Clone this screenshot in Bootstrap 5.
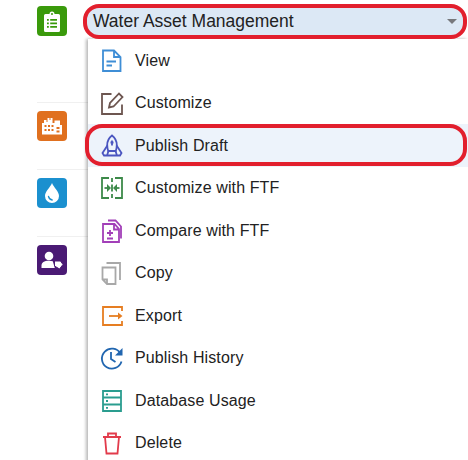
<!DOCTYPE html>
<html lang="en">
<head>
<meta charset="utf-8">
<title>Water Asset Management</title>
<link href="https://cdn.jsdelivr.net/npm/bootstrap@5.3.0/dist/css/bootstrap.min.css" rel="stylesheet">
<style>
html,body{height:100%;overflow:hidden}
body{background:#fff;font-family:"Liberation Sans",Arial,sans-serif;color:#222;position:relative}
.app-row{height:67px;padding-top:8px;margin-left:37px;border-bottom:1px solid #f0f0f0}
.app-row:first-child{height:103px;padding-top:6px}
.app-tile{width:30px;height:30px;border-radius:4px}
.app-tile svg{width:30px;height:30px;display:block}
.t-green{background:#3a9a0b}.t-orange{background:#e0701f}.t-blue{background:#1b90cf}.t-purple{background:#4a1a74}
.picker{position:absolute;left:83px;top:4px;width:384px;height:35px;background:#dce8f5;border:4px solid #e21f2d;border-radius:16px;padding:0 6px;font-size:17.5px;color:#222;z-index:3}
.picker-caret{border-left:5px solid transparent;border-right:5px solid transparent;border-top:5px solid #77787c;margin-right:0}
.menu-panel{position:absolute;left:88px;top:39.25px;right:0;background:#fff;box-shadow:-2px 0 3px rgba(0,0,0,.28);z-index:2;border-radius:0;--bs-list-group-border-width:0}
.menu-row{height:42.5px;padding:0 0 0 10px;gap:9px;font-size:16px;color:#222;letter-spacing:.12px;position:relative;background:#fff}
.menu-row svg{width:28px;height:28px;flex:none}
.menu-row.is-hot{background:#edf3fb}
.menu-row.is-hot::after{content:"";position:absolute;left:-3px;right:1px;top:0;bottom:1px;border:4px solid #e21f2d;border-radius:17px}
.menu-row svg *{fill:none;stroke-width:1.8}
.menu-row svg .solid{fill:currentColor;stroke:none}
.c-view{color:#3f8ed6}.c-cust{color:#6d5650}.c-pub{color:#4a55c0}.c-ftf{color:#3d8a4a}.c-cmp{color:#a23fb8}.c-copy{color:#a8a8a8}.c-exp{color:#e67e22}.c-hist{color:#2166b0}.c-db{color:#2a9d8f}.c-del{color:#e23b4b}
</style>
</head>
<body>
<div class="d-flex flex-column">
  <div class="app-row"><div class="app-tile t-green"><svg viewBox="0 0 30 30"><path fill="#fff" fill-rule="evenodd" d="M8.500 8h4a2.500 2.500 0 0 1 5 0h4A1.500 1.500 0 0 1 23 9.500V24.500A1.500 1.500 0 0 1 21.500 26h-13A1.500 1.500 0 0 1 7 24.500V9.500A1.500 1.500 0 0 1 8.500 8zM15 7a1 1 0 1 0 0 2 1 1 0 0 0 0-2zM10 13v1.800h1.800V13zM13.200 13v1.800h6.800V13zM10 16.500v1.800h1.800v-1.800zM13.200 16.500v1.800h6.800v-1.800zM10 20v1.800h1.800V20zM13.200 20v1.800h6.800V20z"/></svg></div></div>
  <div class="app-row"><div class="app-tile t-orange"><svg viewBox="0 0 30 30"><path fill="#fff" fill-rule="evenodd" d="M5 12h2V9h2.500v2h1V7h2v2h1V7h2v5h2V9.500h5.500V14H25v9.500H5zM7.500 14v2h2v-2zM11 14v2h2v-2zM14.500 14v2h2v-2zM7.500 18v2h2v-2zM11 18v2h2v-2zM14.500 18v2h2v-2zM19.500 16v2h3v-2zM19.500 19.500v2h3v-2z"/></svg></div></div>
  <div class="app-row"><div class="app-tile t-blue"><svg viewBox="0 0 30 30"><path fill="#fff" d="M15 5c1.800 4.500 7 8.500 7 13a7 7 0 0 1-14 0C8 13.500 13.200 9.500 15 5z"/><path fill="none" stroke="#1b90cf" stroke-width="1.300" stroke-linecap="round" d="M11.500 18.500c.5 2 1.700 3.200 3.700 3.500"/></svg></div></div>
  <div class="app-row border-0"><div class="app-tile t-purple"><svg viewBox="0 0 30 30"><circle cx="12" cy="11" r="4.300" fill="#fff"/><path fill="#fff" d="M4.500 23v-2.500c0-3 2.500-4.800 7.500-4.800 1.500 0 2.800.2 3.800.5l2 6.800z"/><path fill="#fff" stroke="#4a1a74" stroke-width="1" d="M17.500 16h6l2.500 3.500-3.500 4.500-5-3z"/></svg></div></div>
</div>

<div class="picker d-flex align-items-center justify-content-between">
  <span>Water Asset Management</span><span class="picker-caret"></span>
</div>

<div class="menu-panel list-group list-group-flush">
  <div class="menu-row d-flex align-items-center"><svg class="c-view" viewBox="0 0 28 28" stroke="currentColor"><path d="M5 3.500h11l6.500 6.500v14H5zM16 3.500V10h6.500"/><path d="M8.500 14.500h9.500M8.500 18.500h5.500"/></svg><span>View</span></div>
  <div class="menu-row d-flex align-items-center"><svg class="c-cust" viewBox="0 0 28 28" stroke="currentColor"><path stroke-width="2" d="M13.500 5H4v20h20V15.500"/><path d="M11 18.500l1-4.500 9-9.500 3.500 3.500-9 9.500z"/></svg><span>Customize</span></div>
  <div class="menu-row is-hot d-flex align-items-center"><svg class="c-pub" viewBox="0 0 28 28" stroke="currentColor"><path d="M14 3.500c3.200 2.500 4.800 6 4.800 9.500 0 2-.3 4-1 6h-7.600c-.7-2-1-4-1-6 0-3.500 1.600-7 4.800-9.500z"/><path d="M9.400 13.500L4.500 21l1.500 2.500h16L23.500 21l-4.900-7.500M10.500 19l-1.500 4.500M17.500 19l1.500 4.500M14 8.500v5M12.500 10.500h3"/></svg><span>Publish Draft</span></div>
  <div class="menu-row d-flex align-items-center"><svg class="c-ftf" viewBox="0 0 28 28" stroke="currentColor"><path stroke-width="2" d="M11 4H4v20h7M17 4h7v20h-7M14 4v4M14 20v4M14 10.500v7"/><path d="M6.500 14h4"/><path d="M21.500 14h-4"/><path class="solid" d="M9 10l4 4-4 4zM19 10l-4 4 4 4z"/></svg><span>Customize with FTF</span></div>
  <div class="menu-row d-flex align-items-center"><svg class="c-cmp" viewBox="0 0 28 28" stroke="currentColor"><path stroke-width="2" d="M5 7h11.500l4.500 5v13H5zM16 7v5.500h5"/><path d="M10 3.500h7.500l5.500 6V21.500"/><path d="M12 13v6M9 16h6M9 21.500h6"/></svg><span>Compare with FTF</span></div>
  <div class="menu-row d-flex align-items-center"><svg class="c-copy" viewBox="0 0 28 28" stroke="currentColor"><path stroke-width="2" d="M4.500 8.500h13v16.500H9L4.500 20.500zM4.500 20.500H9V25"/><path stroke-width="2" d="M8.500 4h13.500v17"/></svg><span>Copy</span></div>
  <div class="menu-row d-flex align-items-center"><svg class="c-exp" viewBox="0 0 28 28" stroke="currentColor"><path stroke-width="2" d="M24 9V5H5v18h19v-4"/><path stroke-width="2" d="M11 14h11"/><path class="solid" d="M20 10.500l4.500 3.500-4.500 3.500z"/></svg><span>Export</span></div>
  <div class="menu-row d-flex align-items-center"><svg class="c-hist" viewBox="0 0 28 28" stroke="currentColor"><path stroke-width="2.200" d="M22.500 9.500a10 10 0 1 0 1 8"/><path stroke-width="2" d="M13 8v7l4.500 3"/><path class="solid" d="M24.500 4v7.500H17z"/></svg><span>Publish History</span></div>
  <div class="menu-row d-flex align-items-center"><svg class="c-db" viewBox="0 0 28 28" stroke="currentColor"><path stroke-width="2" d="M5 4h18v20H5zM5 10.500h18M5 17.500h18"/><path d="M8 7.300h2M8 14h2M8 20.800h2"/></svg><span>Database Usage</span></div>
  <div class="menu-row d-flex align-items-center"><svg class="c-del" viewBox="0 0 28 28" stroke="currentColor"><path stroke-width="2.200" d="M5 8h18M10 8V4.500h8V8M7 8l1.500 16.500h11L21 8"/></svg><span>Delete</span></div>
</div>
<script src="https://cdn.jsdelivr.net/npm/bootstrap@5.3.0/dist/js/bootstrap.bundle.min.js"></script>
</body>
</html>
